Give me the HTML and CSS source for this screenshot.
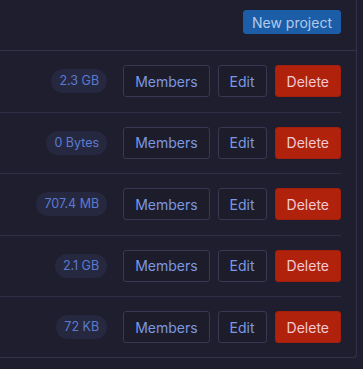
FILE: index.html
```html
<!DOCTYPE html>
<html lang="en">
<head>
    <meta charset="UTF-8">
    <meta name="viewport" content="width=device-width, initial-scale=1.0">
    <title>Projects</title>
    <link rel="stylesheet" href="styles.css">
</head>
<body>
    <div class="panel">
        <div class="panel-header">
            <button class="btn btn-primary">New project</button>
        </div>
        <ul class="project-list">
            <li class="project">
                <span class="size">2.3 GB</span>
                <button class="btn">Members</button>
                <button class="btn">Edit</button>
                <button class="btn btn-danger">Delete</button>
            </li>
            <li class="project">
                <span class="size">0 Bytes</span>
                <button class="btn">Members</button>
                <button class="btn">Edit</button>
                <button class="btn btn-danger">Delete</button>
            </li>
            <li class="project">
                <span class="size">707.4 MB</span>
                <button class="btn">Members</button>
                <button class="btn">Edit</button>
                <button class="btn btn-danger">Delete</button>
            </li>
            <li class="project">
                <span class="size">2.1 GB</span>
                <button class="btn">Members</button>
                <button class="btn">Edit</button>
                <button class="btn btn-danger">Delete</button>
            </li>
            <li class="project">
                <span class="size">72 KB</span>
                <button class="btn">Members</button>
                <button class="btn">Edit</button>
                <button class="btn btn-danger">Delete</button>
            </li>
        </ul>
    </div>
</body>
</html>
```

FILE: styles.css
```css
body {
    margin: 0;
    background-color: #1f1e2e;
    font-family: Inter, "Noto Sans", sans-serif;
}
.panel {
    width: 357px;
    height: 358px;
    box-sizing: border-box;
    border: 1px solid #33324b;
    border-left: none;
    border-top: none;
    border-radius: 0 0 4px 0;
}
.panel-header {
    height: 51px;
    box-sizing: border-box;
    border-bottom: 1px solid #33324b;
    display: flex;
    align-items: center;
    justify-content: flex-end;
    padding: 0 15px 6px 0;
}
.project-list {
    list-style: none;
    margin: 0;
    padding: 0 15px 0 0;
}
.project {
    display: flex;
    align-items: center;
    justify-content: flex-end;
    gap: 8px;
    padding: 14px 0 14.5px;
    border-bottom: 1px solid #2f2e45;
}
.project:last-child {
    border-bottom: none;
}
.size {
    background-color: #262840;
    color: #5b7bd0;
    font-size: 12.5px;
    height: 24px;
    line-height: 24px;
    padding: 0 8px;
    border-radius: 12px;
    margin-right: 8px;
}
.btn {
    font-family: inherit;
    font-size: 14px;
    height: 32px;
    padding: 0 11px;
    background-color: #1d1c2b;
    color: #7b98e0;
    border: 1px solid #393853;
    border-radius: 3px;
    cursor: pointer;
}
.btn-primary {
    height: 24px;
    padding: 0 8px;
    background-color: #1b5ea7;
    border-color: #1b5ea7;
    color: #b3c9ea;
}
.btn-danger {
    background-color: #b1220c;
    border-color: #a11f0c;
    color: #f1c9d3;
}
```
